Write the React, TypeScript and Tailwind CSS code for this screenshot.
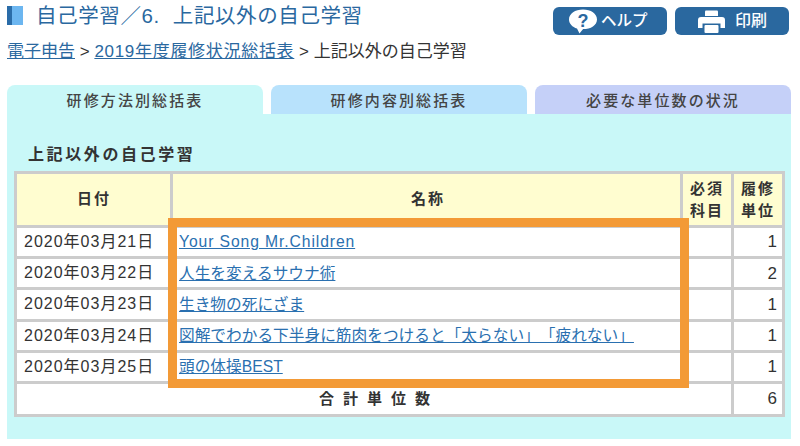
const JP = "font-['Liberation_Sans','Noto_Sans_CJK_JP',sans-serif]";

const rows = [
  { date: "2020年03月21日", name: "Your Song Mr.Children", unit: 1, wide: true },
  { date: "2020年03月22日", name: "人生を変えるサウナ術", unit: 2, wide: false },
  { date: "2020年03月23日", name: "生き物の死にざま", unit: 1, wide: false },
  { date: "2020年03月24日", name: "図解でわかる下半身に筋肉をつけると「太らない」「疲れない」", unit: 1, wide: false },
  { date: "2020年03月25日", name: "頭の体操BEST", unit: 1, wide: false },
];

function HelpIcon() {
  return (
    <svg width="30" height="25" viewBox="0 0 30 25" className="shrink-0">
      <path d="M15 0.5C7.2 0.5 1 4.6 1 10.4c0 4.3 3.4 7.6 8 9L11.5 24.5l3.6-4.4C22.8 20.1 29 16.2 29 10.4S22.8 0.5 15 0.5z" fill="#fff" />
      <text x="15" y="17.5" textAnchor="middle" fontSize="18" fontWeight="700" fill="#2a689f" fontFamily="Liberation Sans">?</text>
    </svg>
  );
}

function PrintIcon() {
  return (
    <svg width="27" height="23" viewBox="0 0 27 23" className="shrink-0">
      <path d="M8 0.5h11a1 1 0 0 1 1 1V6H7V1.500a1 1 0 0 1 1-1z" fill="#fff" />
      <path d="M3 7h21a3 3 0 0 1 3 3v8h-4.500v-4.500h-18V18H0v-8a3 3 0 0 1 3-3z" fill="#fff" />
      <rect x="6.500" y="15" width="14" height="8" rx="1" fill="#fff" />
    </svg>
  );
}

export default function App() {
  return (
    <div className={`${JP} w-[800px] h-[446px] overflow-hidden bg-white text-[#333]`}>
      <div className="flex items-start justify-between pl-[7px] pr-[11px] pt-[7px] h-[37px]">
        <div className="flex items-center -mt-[1px] h-[19px]">
          <div className="flex w-[16px] h-[19px] mr-[13px]">
            <div className="w-[5px] bg-[#2a6ca8]" />
            <div className="w-[11px] bg-[#6cb6f0]" />
          </div>
          <h1 className="text-[20.5px] leading-[19px] text-[#2a689f] whitespace-nowrap tracking-[0.6px]">
            自己学習／6.<span className="ml-[13px]">上記以外の自己学習</span>
          </h1>
        </div>
        <div className="flex gap-[8px]">
          <div className="w-[114px] h-[28px] rounded-[6px] bg-[#2a689f] flex items-center pl-[15px] gap-[3px] text-white text-[15.500px] font-medium">
            <HelpIcon />
            <span>ヘルプ</span>
          </div>
          <div className="w-[114px] h-[28px] rounded-[6px] bg-[#2a689f] flex items-center pl-[23px] gap-[10px] text-white text-[16px] font-medium">
            <PrintIcon />
            <span>印刷</span>
          </div>
        </div>
      </div>

      <div className="pl-[7px] text-[17px] leading-[26px] h-[48px] whitespace-nowrap pt-[2px]">
        <a className="text-[#2a689f] underline">電子申告</a>
        <span> &gt; </span>
        <a className="text-[#2a689f] underline tracking-[0.7px]">2019年度履修状況総括表</a>
        <span> &gt; 上記以外の自己学習</span>
      </div>

      <div className="flex pl-[7px] gap-[8px] w-[791px]">
        <div className="w-[256px] h-[29px] rounded-t-[8px] bg-[#c9f8f8] text-center text-[15px] font-medium leading-[31px] tracking-[2.100px] text-[#444]">研修方法別総括表</div>
        <div className="w-[256px] h-[29px] rounded-t-[8px] bg-[#b8e2fc] text-center text-[15px] font-medium leading-[31px] tracking-[2.100px] text-[#444]">研修内容別総括表</div>
        <div className="flex-1 h-[29px] rounded-t-[8px] bg-[#c5d0f8] text-center text-[15px] font-medium leading-[31px] tracking-[2.100px] text-[#444]">必要な単位数の状況</div>
      </div>

      <div className="ml-[7px] w-[784px] h-[325px] bg-[#c9f8f8] pl-[8px] pt-[30px]">
        <div className="pl-[13px] h-[27px] text-[16px] leading-[22px] font-bold tracking-[2.600px] text-[#333]">上記以外の自己学習</div>
        <div className="relative w-[769px]">
          <table className="table-fixed border-collapse -ml-px w-[768px] bg-white border-[3px] border-[#ccc] text-[16px]">
            <colgroup>
              <col className="w-[156px]" />
              <col className="w-[510px]" />
              <col className="w-[51px]" />
              <col className="w-[51px]" />
            </colgroup>
            <thead>
              <tr className="h-[54px] bg-[#fffdd0] text-[15px] font-bold text-[#333]">
                <th className="border-[3px] border-[#ccc] tracking-[2px] pl-[1px]">日付</th>
                <th className="border-[3px] border-[#ccc] tracking-[2px] pl-[3px]">名称</th>
                <th className="border-[3px] border-[#ccc] leading-[22px] tracking-[2px]">必須<br />科目</th>
                <th className="border-[3px] border-[#ccc] leading-[22px] tracking-[2px]">履修<br />単位</th>
              </tr>
            </thead>
            <tbody>
              {rows.map((r) => (
                <tr key={r.date} className="h-[31.2px]">
                  <td className="border-[3px] border-[#ccc] pl-[7px] whitespace-nowrap tracking-[1px]">{r.date}</td>
                  <td className="border-[3px] border-[#ccc] pl-[6px] whitespace-nowrap text-[15.700px] [text-spacing-trim:space-all]">
                    <a className={r.wide ? "text-[#2a70b0] underline tracking-[0.900px]" : "text-[#2a70b0] underline"}>{r.name}</a>
                  </td>
                  <td className="border-[3px] border-[#ccc]" />
                  <td className="border-[3px] border-[#ccc] text-right pr-[5px] text-[17px]">{r.unit}</td>
                </tr>
              ))}
              <tr className="h-[33px]">
                <td colSpan={3} className="border-[3px] border-[#ccc] text-center text-[15px] font-bold tracking-[9px] pl-[10px]">合計単位数</td>
                <td className="border-[3px] border-[#ccc] text-right pr-[5px] text-[17px]">6</td>
              </tr>
            </tbody>
          </table>
          <div className="absolute left-[153px] top-[47px] w-[521px] h-[170px] border-[9px] border-[#f39a36]" />
        </div>
      </div>
    </div>
  );
}
